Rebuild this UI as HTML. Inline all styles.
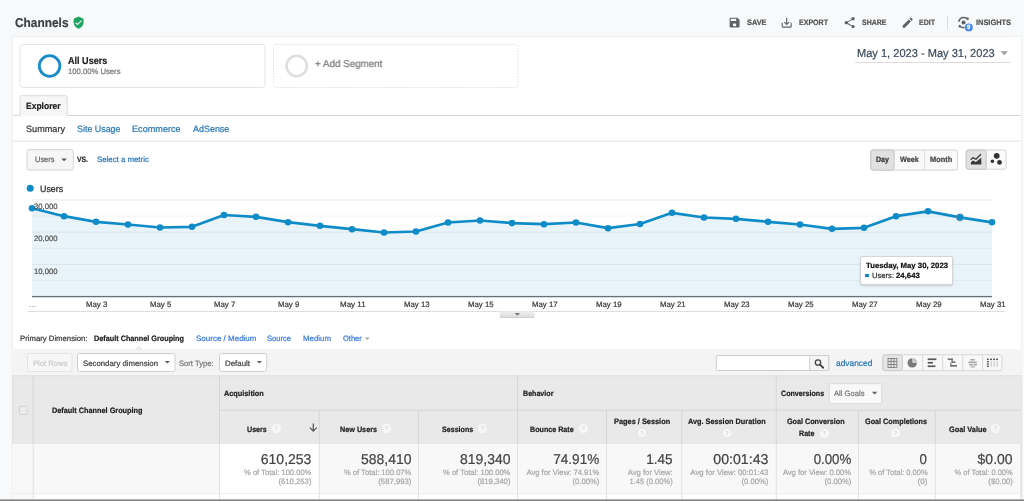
<!DOCTYPE html>
<html lang="en"><head><meta charset="utf-8"><title>Channels - Analytics</title>
<style>
html,body{margin:0;padding:0;}
body{width:1024px;height:501px;overflow:hidden;background:#f8f9fa;position:relative;font-family:"Liberation Sans",sans-serif;}
.t{-webkit-text-stroke:0.22px currentColor;position:absolute;white-space:nowrap;line-height:1;display:block;text-rendering:geometricPrecision;}
#labels{will-change:transform;}
.abs{position:absolute;box-sizing:border-box;}
.vd{width:1px;background:#d8d8d8;}
.hq{width:8.8px;height:8.8px;border-radius:50%;background:#f7f7f7;color:#d9d9d9;font-size:6.2px;line-height:8.8px;text-align:center;font-weight:700;}

</style></head>
<body>
<svg class="abs" id="shapes" style="left:0;top:0" width="1024" height="501" viewBox="0 0 1024 501">
<rect x="11.40" y="36.10" width="1010.60" height="480.00" rx="0" fill="#f1f2f4"/>
<rect x="12.20" y="36.50" width="1009.20" height="480.00" rx="0" fill="#eceef0"/>
<rect x="12.80" y="37.10" width="1008.10" height="480.00" rx="0" fill="#fff"/>
<rect x="19.90" y="44.50" width="245.10" height="42.90" rx="3" fill="#fff" stroke="#e5e5e5" stroke-width="1"/>
<rect x="273.45" y="44.45" width="244.60" height="43.00" rx="3" fill="#fff" stroke="#dadada" stroke-width="0.9" stroke-dasharray="1.400 1.400"/>
<circle cx="49.600" cy="66" r="10.300" fill="none" stroke="#1a8cca" stroke-width="2.800"/>
<circle cx="296.7" cy="66" r="10.2" fill="none" stroke="#dddddd" stroke-width="2.5"/>
<rect x="855.00" y="62.00" width="155.50" height="1.00" rx="0" fill="#dcdcdc"/>
<path d="M1000.60 51.30h7.40l-3.70 3.90z" fill="#9e9e9e"/>
<rect x="13.10" y="115.00" width="7.00" height="1.00" rx="0" fill="#d8d8d8"/>
<rect x="67.20" y="115.00" width="953.40" height="1.00" rx="0" fill="#d8d8d8"/>
<path d="M20 116V97.200q0-1.500 1.500-1.500H65.700q1.500 0 1.500 1.500V116" fill="#f6f6f6" stroke="#dadada" stroke-width="1"/>
<rect x="20.50" y="115.50" width="46.20" height="1.00" rx="0" fill="#fbfbfb"/>
<rect x="13.10" y="140.70" width="1007.50" height="1.00" rx="0" fill="#e2e2e2"/>
<rect x="27.00" y="149.70" width="46.30" height="20.30" rx="2" fill="#f6f6f6" stroke="#d4d4d4" stroke-width="1"/>
<path d="M61.30 158.40h5.60l-2.80 2.90z" fill="#555"/>
<rect x="870.80" y="150.00" width="86.70" height="20.10" rx="2" fill="#f9f9f9" stroke="#d4d4d4" stroke-width="1"/>
<rect x="870.80" y="150.00" width="23.30" height="20.10" rx="2" fill="#e1e1e1" stroke="#c6c6c6" stroke-width="1"/>
<rect x="924.20" y="150.50" width="1.00" height="19.10" rx="0" fill="#dedede"/>
<rect x="966.20" y="150.00" width="39.90" height="19.20" rx="2" fill="#fafafa" stroke="#d4d4d4" stroke-width="1"/>
<rect x="966.20" y="150.00" width="20.00" height="19.20" rx="2" fill="#e1e1e1" stroke="#c6c6c6" stroke-width="1"/>
<circle cx="30.2" cy="188.2" r="3.5" fill="#0f8cc8"/>
<rect x="11.90" y="348.80" width="1010.20" height="26.70" rx="0" fill="#f4f4f4"/>
<path d="M135.600 349.100l3.200-3 3.200 3z" fill="#f0f0f0" stroke="#e4e4e4" stroke-width=".6"/>
<rect x="27.50" y="353.50" width="44.50" height="18.00" rx="2" fill="#f7f7f7" stroke="#e4e4e4" stroke-width="1"/>
<rect x="77.50" y="353.50" width="97.50" height="18.00" rx="2" fill="#fff" stroke="#d0d0d0" stroke-width="1"/>
<path d="M164.60 360.90h5.40l-2.70 2.70z" fill="#606060"/>
<rect x="219.50" y="353.50" width="47.20" height="18.00" rx="2" fill="#fff" stroke="#d0d0d0" stroke-width="1"/>
<path d="M256.80 360.90h5.20l-2.60 2.70z" fill="#606060"/>
<path d="M364.80 337.60h5.00l-2.50 2.50z" fill="#aaa"/>
<rect x="716.30" y="355.50" width="112.40" height="15.00" rx="1" fill="#fff" stroke="#cdcdcd" stroke-width="1"/>
<rect x="809.70" y="355.50" width="19.00" height="15.00" rx="1" fill="#f5f5f5" stroke="#cdcdcd" stroke-width="1"/>
<rect x="882.90" y="354.80" width="119.10" height="15.90" rx="2" fill="#f8f8f8" stroke="#d6d6d6" stroke-width="1"/>
<rect x="882.90" y="354.80" width="19.40" height="15.90" rx="2" fill="#e5e5e5" stroke="#cbcbcb" stroke-width="1"/>
<rect x="922.10" y="355.30" width="1.00" height="14.90" rx="0" fill="#dadada"/>
<rect x="942.10" y="355.30" width="1.00" height="14.90" rx="0" fill="#dadada"/>
<rect x="962.20" y="355.30" width="1.00" height="14.90" rx="0" fill="#dadada"/>
<rect x="982.10" y="355.30" width="1.00" height="14.90" rx="0" fill="#dadada"/>
<rect x="12.30" y="375.50" width="1008.20" height="69.00" rx="0" fill="#e9e9e9"/>
<rect x="12.30" y="375.30" width="1009.90" height="1.00" rx="0" fill="#dedede"/>
<rect x="12.30" y="375.50" width="1.10" height="69.00" rx="0" fill="#e0e0e0"/>
<rect x="12.90" y="444.50" width="1007.60" height="49.00" rx="0" fill="#f8f8f8"/>
<rect x="219.50" y="444.50" width="99.70" height="60.00" rx="0" fill="#fff"/>
<rect x="12.90" y="493.00" width="1007.60" height="1.00" rx="0" fill="#eeeeee"/>
<rect x="12.90" y="494.00" width="20.30" height="8.00" rx="0" fill="#f9f9f9"/>
<rect x="33.20" y="494.00" width="987.20" height="8.00" rx="0" fill="#fff"/>
<rect x="1020.30" y="375.50" width="1.90" height="126.00" rx="0" fill="#e3e3e3"/>
<rect x="32.70" y="375.50" width="1.00" height="69.00" rx="0" fill="#d7d7d7"/>
<rect x="32.70" y="444.50" width="1.00" height="58.00" rx="0" fill="#e2e2e2"/>
<rect x="219.00" y="375.50" width="1.00" height="69.00" rx="0" fill="#d7d7d7"/>
<rect x="219.00" y="444.50" width="1.00" height="58.00" rx="0" fill="#e2e2e2"/>
<rect x="517.00" y="375.50" width="1.00" height="69.00" rx="0" fill="#d7d7d7"/>
<rect x="517.00" y="444.50" width="1.00" height="58.00" rx="0" fill="#e2e2e2"/>
<rect x="775.80" y="375.50" width="1.00" height="69.00" rx="0" fill="#d7d7d7"/>
<rect x="775.80" y="444.50" width="1.00" height="58.00" rx="0" fill="#e2e2e2"/>
<rect x="318.80" y="410.00" width="1.00" height="34.50" rx="0" fill="#d7d7d7"/>
<rect x="318.80" y="444.50" width="1.00" height="58.00" rx="0" fill="#e2e2e2"/>
<rect x="418.00" y="410.00" width="1.00" height="34.50" rx="0" fill="#d7d7d7"/>
<rect x="418.00" y="444.50" width="1.00" height="58.00" rx="0" fill="#e2e2e2"/>
<rect x="606.00" y="410.00" width="1.00" height="34.50" rx="0" fill="#d7d7d7"/>
<rect x="606.00" y="444.50" width="1.00" height="58.00" rx="0" fill="#e2e2e2"/>
<rect x="681.20" y="410.00" width="1.00" height="34.50" rx="0" fill="#d7d7d7"/>
<rect x="681.20" y="444.50" width="1.00" height="58.00" rx="0" fill="#e2e2e2"/>
<rect x="858.00" y="410.00" width="1.00" height="34.50" rx="0" fill="#d7d7d7"/>
<rect x="858.00" y="444.50" width="1.00" height="58.00" rx="0" fill="#e2e2e2"/>
<rect x="934.80" y="410.00" width="1.00" height="34.50" rx="0" fill="#d7d7d7"/>
<rect x="934.80" y="444.50" width="1.00" height="58.00" rx="0" fill="#e2e2e2"/>
<rect x="219.50" y="409.60" width="800.90" height="1.00" rx="0" fill="#d7d7d7"/>
<rect x="19.30" y="406.30" width="7.80" height="8.20" rx="1" fill="#ececec" stroke="#d3d3d3" stroke-width="1"/>
<rect x="829.30" y="383.70" width="52.40" height="20.00" rx="2" fill="#f9f9f9" stroke="#dadada" stroke-width="1"/>
<path d="M871.80 391.70h5.60l-2.80 2.90z" fill="#666"/>
</svg>
<svg class="abs" id="chart" style="left:0;top:190px;" width="1024" height="135" viewBox="0 190 1024 135">
<rect x="32" y="199.50" width="960" height="1" fill="#e8e8e8"/>
<rect x="32" y="215.60" width="960" height="1" fill="#f5f5f5"/>
<rect x="32" y="231.70" width="960" height="1" fill="#efefef"/>
<rect x="32" y="247.80" width="960" height="1" fill="#f5f5f5"/>
<rect x="32" y="263.90" width="960" height="1" fill="#efefef"/>
<rect x="32" y="280.00" width="960" height="1" fill="#f5f5f5"/>
<polygon points="32,296.6 32,208.2 64,216.2 96,221.8 128,224.5 160,227.5 192,226.8 224,215 256,216.8 288,222.2 320,225.8 352,229.2 384,232.5 416,231.5 448,222.5 480,220.5 512,223.1 544,224.2 576,222.5 608,228.2 640,224 672,212.8 704,217.5 736,218.8 768,221.8 800,224.5 832,228.8 864,227.8 896,216.2 928,211.3 960,217.4 992,222.3 992,296.6" fill="#0f8cc8" fill-opacity="0.095"/>
<rect x="32" y="295.95" width="960" height="1.3" fill="#66717a"/>
<polyline points="32,208.2 64,216.2 96,221.8 128,224.5 160,227.5 192,226.8 224,215 256,216.8 288,222.2 320,225.8 352,229.2 384,232.5 416,231.5 448,222.5 480,220.5 512,223.1 544,224.2 576,222.5 608,228.2 640,224 672,212.8 704,217.5 736,218.8 768,221.8 800,224.5 832,228.8 864,227.8 896,216.2 928,211.3 960,217.4 992,222.3" fill="none" stroke="#0f8cc8" stroke-width="2.7" stroke-linejoin="round" stroke-linecap="round"/>
<circle cx="32" cy="208.2" r="3.3" fill="#0f8cc8"/>
<circle cx="64" cy="216.2" r="3.3" fill="#0f8cc8"/>
<circle cx="96" cy="221.8" r="3.3" fill="#0f8cc8"/>
<circle cx="128" cy="224.5" r="3.3" fill="#0f8cc8"/>
<circle cx="160" cy="227.5" r="3.3" fill="#0f8cc8"/>
<circle cx="192" cy="226.8" r="3.3" fill="#0f8cc8"/>
<circle cx="224" cy="215" r="3.3" fill="#0f8cc8"/>
<circle cx="256" cy="216.8" r="3.3" fill="#0f8cc8"/>
<circle cx="288" cy="222.2" r="3.3" fill="#0f8cc8"/>
<circle cx="320" cy="225.8" r="3.3" fill="#0f8cc8"/>
<circle cx="352" cy="229.2" r="3.3" fill="#0f8cc8"/>
<circle cx="384" cy="232.5" r="3.3" fill="#0f8cc8"/>
<circle cx="416" cy="231.5" r="3.3" fill="#0f8cc8"/>
<circle cx="448" cy="222.5" r="3.3" fill="#0f8cc8"/>
<circle cx="480" cy="220.5" r="3.3" fill="#0f8cc8"/>
<circle cx="512" cy="223.1" r="3.3" fill="#0f8cc8"/>
<circle cx="544" cy="224.2" r="3.3" fill="#0f8cc8"/>
<circle cx="576" cy="222.5" r="3.3" fill="#0f8cc8"/>
<circle cx="608" cy="228.2" r="3.3" fill="#0f8cc8"/>
<circle cx="640" cy="224" r="3.3" fill="#0f8cc8"/>
<circle cx="672" cy="212.8" r="3.3" fill="#0f8cc8"/>
<circle cx="704" cy="217.5" r="3.3" fill="#0f8cc8"/>
<circle cx="736" cy="218.8" r="3.3" fill="#0f8cc8"/>
<circle cx="768" cy="221.8" r="3.3" fill="#0f8cc8"/>
<circle cx="800" cy="224.5" r="3.3" fill="#0f8cc8"/>
<circle cx="832" cy="228.8" r="3.3" fill="#0f8cc8"/>
<circle cx="864" cy="227.8" r="3.3" fill="#0f8cc8"/>
<circle cx="896" cy="216.2" r="3.3" fill="#0f8cc8"/>
<circle cx="928" cy="211.3" r="3.3" fill="#0f8cc8"/>
<circle cx="960" cy="217.4" r="4.1" fill="#9a9a9a" fill-opacity="0.55"/>
<circle cx="960" cy="217.4" r="3.3" fill="#0f8cc8"/>
<circle cx="992" cy="222.3" r="3.3" fill="#0f8cc8"/>
<rect x="27.5" y="311" width="978" height="1" fill="#dedede"/>
<defs><linearGradient id="hg" x1="0" y1="0" x2="0" y2="1"><stop offset="0" stop-color="#f0f0f0"/><stop offset="1" stop-color="#dadada"/></linearGradient></defs>
<path d="M499.700 311.500h34.800v5.200q0 1-1 1h-32.800q-1 0-1-1z" fill="url(#hg)"/>
<path d="M500.200 317.500h33.800" stroke="#c6c6c6" stroke-width=".7" fill="none"/>
<path d="M514.6 312.9h5.4l-2.7 2.8z" fill="#777"/>
</svg>
<div class="abs" style="left:860px;top:256.2px;width:93px;height:28.4px;background:#fff;border:1px solid #d4d4d4;border-radius:2px;box-shadow:0 1px 2px rgba(0,0,0,.15);"></div>
<div class="abs" style="left:865px;top:274px;width:3.5px;height:3.2px;background:#0f8cc8;"></div>
<svg class="abs" style="left:71.85px;top:15.85px;" width="13.2" height="13.2" viewBox="0 0 24 24"><path d="M12 1L3 5v6c0 5.55 3.84 10.74 9 12 5.16-1.26 9-6.45 9-12V5l-9-4zm-2 16l-4-4 1.41-1.41L10 14.170l6.59-6.59L18 9l-8 8z" fill="#1ea362"/></svg>
<svg class="abs" style="left:727.7px;top:16.2px;" width="13.2" height="13.2" viewBox="0 0 24 24"><path d="M17 3H5c-1.11 0-2 .9-2 2v14c0 1.1.89 2 2 2h14c1.1 0 2-.9 2-2V7l-4-4zm-5 16c-1.66 0-3-1.34-3-3s1.340-3 3-3 3 1.340 3 3-1.340 3-3 3zm3-10H5V5h10v4z" fill="#5f6368"/></svg>
<svg class="abs" style="left:780px;top:16.2px;" width="13.4" height="13.4" viewBox="0 0 24 24"><path d="M19 12v7H5v-7H3v7c0 1.100.9 2 2 2h14c1.100 0 2-.9 2-2v-7h-2zm-6 .67l2.590-2.580L17 11.500l-5 5-5-5 1.410-1.410L11 12.670V3h2z" fill="#5f6368"/></svg>
<svg class="abs" style="left:842.6px;top:16px;" width="13.4" height="13.4" viewBox="0 0 24 24"><path d="M18 16.080c-.76 0-1.440.3-1.960.77L8.910 12.700c.05-.23.09-.46.09-.7s-.04-.47-.09-.7l7.050-4.110c.54.5 1.250.81 2.040.81 1.660 0 3-1.340 3-3s-1.340-3-3-3-3 1.340-3 3c0 .24.04.47.09.7L8.040 9.810C7.500 9.310 6.790 9 6 9c-1.660 0-3 1.340-3 3s1.340 3 3 3c.79 0 1.500-.31 2.040-.81l7.120 4.160c-.05.21-.08.43-.08.65 0 1.610 1.310 2.920 2.920 2.920 1.610 0 2.920-1.310 2.920-2.920s-1.310-2.920-2.920-2.920z" fill="#5f6368"/></svg>
<svg class="abs" style="left:900.7px;top:16.3px;" width="13.4" height="13.4" viewBox="0 0 24 24"><path d="M3 17.250V21h3.750L17.810 9.940l-3.750-3.750L3 17.250zM20.710 7.040c.39-.39.39-1.020 0-1.410l-2.340-2.340c-.39-.39-1.020-.39-1.410 0l-1.830 1.830 3.750 3.750 1.830-1.830z" fill="#5f6368"/></svg>
<div class="abs" style="left:947px;top:16px;width:1px;height:13.2px;background:#dadce0;"></div>
<svg class="abs" style="left:956px;top:15px;" width="20" height="20" viewBox="956 15 20 20">
<path d="M958.9 21.2a5 5 0 0 1 8.9-1.700" fill="none" stroke="#5f6368" stroke-width="1.5" stroke-linecap="round"/>
<path d="M968.5 23.600a5 5 0 0 1 -9 1.900" fill="none" stroke="#5f6368" stroke-width="1.500" stroke-linecap="round"/>
<path d="M966.6 17.300l2.600.6-1.500 2.200z" fill="#5f6368"/>
<path d="M960.700 27.700l-2.600-.6 1.500-2.200z" fill="#5f6368"/>
<circle cx="963.600" cy="22.500" r="2.100" fill="#5f6368"/>
<circle cx="968.800" cy="27.400" r="4.300" fill="#f8f9fa"/>
<circle cx="968.800" cy="27.400" r="3.950" fill="#4285f4"/>
</svg>
<svg class="abs" style="left:966px;top:150px;" width="41" height="20" viewBox="966 150 41 20">
<path d="M970.700 159.800l2.200-2.200 3 1.700 5-5.100" fill="none" stroke="#3a3a3a" stroke-width="1.250" stroke-linejoin="round"/>
<path d="M970.900 164.500v-2.300l2.100-1.600 2.900 1.500 5.400-4.400v6.800z" fill="#3a3a3a"/>
<circle cx="996.700" cy="155.800" r="2.900" fill="#333"/>
<circle cx="992.400" cy="161.200" r="1.800" fill="#333"/>
<circle cx="999.500" cy="162.400" r="2.400" fill="#333"/>
</svg>
<svg class="abs" style="left:812px;top:357px;" width="14" height="13" viewBox="812 357 14 13">
<circle cx="818" cy="362.500" r="2.700" fill="none" stroke="#444" stroke-width="1.300"/>
<path d="M820 364.600l3.200 3.100" stroke="#444" stroke-width="1.900" stroke-linecap="round"/>
</svg>
<svg class="abs" style="left:882px;top:354px;" width="121" height="18" viewBox="882 354 121 18">
<g fill="none" stroke="#6e6e6e" stroke-width="0.75"><rect x="888" y="358.400" width="8.900" height="9.100"/><path d="M891 358.400v9.100M893.900 358.400v9.100M888 361.400h8.900M888 364.500h8.900"/></g>
<circle cx="912.200" cy="362.900" r="4.700" fill="#7a7a7a"/><path d="M912.700 362.400v-4.700a4.700 4.700 0 0 1 4.700 4.700z" fill="#c4c4c4" stroke="#f6f6f6" stroke-width="0.600"/>
<g fill="#585858"><rect x="927.700" y="358.400" width="8.700" height="1.700"/><rect x="927.700" y="361.900" width="5.200" height="1.700"/><rect x="927.700" y="365.400" width="7.700" height="1.700"/></g>
<g fill="#606060"><rect x="947.700" y="358.500" width="5" height="1.400"/><rect x="951.600" y="358.500" width="1" height="4.200"/><rect x="951.600" y="361.400" width="3.800" height="1.400"/><rect x="950.400" y="362.600" width="1" height="3.800"/><rect x="950.400" y="365.100" width="6.600" height="1.500"/></g>
<g fill="#a8a8a8"><rect x="970" y="359" width="5" height="1.600" rx=".8"/><rect x="968.200" y="361.400" width="8.800" height="1.800" rx=".9"/><rect x="969" y="364" width="4" height="1.600" rx=".8"/><rect x="973.400" y="364" width="3.800" height="1.600" rx=".8"/><rect x="970.500" y="366.300" width="4.600" height="1.300" rx=".6"/></g>
<g fill="#5a5a5a"><rect x="986.900" y="358.600" width="2" height="1.400"/><rect x="986.900" y="360.900" width="2" height="1.400"/><rect x="986.900" y="363.200" width="2" height="1.400"/><rect x="986.900" y="365.500" width="2" height="1.400"/><rect x="990" y="358.600" width="2" height="1.400"/><rect x="993" y="358.600" width="2" height="1.400"/><rect x="996" y="358.600" width="2" height="1.400"/></g><g fill="#b5b5b5"><rect x="990.700" y="360.600" width=".8" height="6.300"/><rect x="993.700" y="360.600" width=".8" height="6.300"/><rect x="996.700" y="360.600" width=".8" height="6.300"/></g>
</svg>
<span class="abs hq" style="left:271.8px;top:423.8px;">?</span>
<span class="abs hq" style="left:381.9px;top:424.1px;">?</span>
<span class="abs hq" style="left:478.4px;top:424.1px;">?</span>
<span class="abs hq" style="left:578.8px;top:424.1px;">?</span>
<span class="abs hq" style="left:637.6px;top:428.6px;">?</span>
<span class="abs hq" style="left:722.6px;top:428.6px;">?</span>
<span class="abs hq" style="left:819.8px;top:429.4px;">?</span>
<span class="abs hq" style="left:891.1px;top:428.6px;">?</span>
<span class="abs hq" style="left:991.1px;top:424.1px;">?</span>
<svg class="abs" style="left:308px;top:422px;" width="11" height="11" viewBox="308 422 11 11">
<path d="M313.300 423.400v7.300M309.900 427.600l3.400 3.500 3.400-3.500" fill="none" stroke="#555" stroke-width="1.250"/>
</svg>
<!-- bottom screenshot edge -->
<svg class="abs" style="left:0;top:497px" width="1024" height="4" viewBox="0 497 1024 4"><defs><linearGradient id="be" x1="0" y1="0" x2="0" y2="1"><stop offset="0" stop-color="#bdbdbd"/><stop offset="1" stop-color="#6a6a6a"/></linearGradient></defs><rect x="0" y="499.100" width="1024" height="2" fill="url(#be)"/></svg>

<div id="labels">
<span class="t" id="t0" style="left:14.50px;transform-origin:0 0;top:17.16px;font-size:12.8px;font-weight:700;color:#3c4043;transform:scaleX(0.9287);">Channels</span>
<span class="t" id="t1" style="left:746.50px;transform-origin:0 0;top:18.88px;font-size:7.82px;font-weight:700;color:#555;transform:scaleX(0.9419);">SAVE</span>
<span class="t" id="t2" style="left:799.00px;transform-origin:0 0;top:18.88px;font-size:7.82px;font-weight:700;color:#555;transform:scaleX(0.9027);">EXPORT</span>
<span class="t" id="t3" style="left:861.50px;transform-origin:0 0;top:18.88px;font-size:7.82px;font-weight:700;color:#555;transform:scaleX(0.8955);">SHARE</span>
<span class="t" id="t4" style="left:919.00px;transform-origin:0 0;top:18.88px;font-size:7.82px;font-weight:700;color:#555;transform:scaleX(0.8990);">EDIT</span>
<span class="t" id="t5" style="left:976.00px;transform-origin:0 0;top:18.88px;font-size:7.82px;font-weight:700;color:#555;transform:scaleX(0.9483);">INSIGHTS</span>
<span class="t" id="t6" style="left:857.30px;transform-origin:0 0;top:48.87px;font-size:11.5px;font-weight:400;color:#3c4a5c;transform:scaleX(0.9616);">May 1, 2023 - May 31, 2023</span>
<span class="t" id="t7" style="left:67.50px;transform-origin:0 0;top:57.37px;font-size:9.96px;font-weight:700;color:#222;transform:scaleX(0.9106);">All Users</span>
<span class="t" id="t8" style="left:68.00px;transform-origin:0 0;top:67.58px;font-size:7.82px;font-weight:400;color:#777;transform:scaleX(0.9827);">100.00% Users</span>
<span class="t" id="t9" style="left:314.80px;transform-origin:0 0;top:60.07px;font-size:9.96px;font-weight:400;color:#777;transform:scaleX(0.9862);">+ Add Segment</span>
<span class="t" id="t10" style="left:26.00px;transform-origin:0 0;top:102.18px;font-size:9.24px;font-weight:700;color:#222;transform:scaleX(0.9208);">Explorer</span>
<span class="t" id="t11" style="left:25.50px;transform-origin:0 0;top:125.18px;font-size:9.24px;font-weight:400;color:#333;transform:scaleX(0.9870);">Summary</span>
<span class="t" id="t12" style="left:76.50px;transform-origin:0 0;top:125.18px;font-size:9.24px;font-weight:400;color:#2a77b8;transform:scaleX(0.9630);">Site Usage</span>
<span class="t" id="t13" style="left:131.80px;transform-origin:0 0;top:125.18px;font-size:9.24px;font-weight:400;color:#2a77b8;transform:scaleX(0.9885);">Ecommerce</span>
<span class="t" id="t14" style="left:192.50px;transform-origin:0 0;top:125.18px;font-size:9.24px;font-weight:400;color:#2a77b8;transform:scaleX(0.9684);">AdSense</span>
<span class="t" id="t15" style="left:34.50px;transform-origin:0 0;top:155.88px;font-size:7.82px;font-weight:400;color:#666;transform:scaleX(0.9556);">Users</span>
<span class="t" id="t16" style="left:77.00px;transform-origin:0 0;top:155.68px;font-size:7.82px;font-weight:700;color:#333;transform:scaleX(0.8734);">VS.</span>
<span class="t" id="t17" style="left:97.00px;transform-origin:0 0;top:155.88px;font-size:7.82px;font-weight:400;color:#2a77b8;transform:scaleX(1.0025);">Select a metric</span>
<span class="t" id="t18" style="left:876.00px;transform-origin:0 0;top:155.68px;font-size:7.82px;font-weight:700;color:#333;transform:scaleX(0.8993);">Day</span>
<span class="t" id="t19" style="left:899.90px;transform-origin:0 0;top:155.68px;font-size:7.82px;font-weight:700;color:#444;transform:scaleX(0.9319);">Week</span>
<span class="t" id="t20" style="left:930.20px;transform-origin:0 0;top:155.68px;font-size:7.82px;font-weight:700;color:#444;transform:scaleX(0.9515);">Month</span>
<span class="t" id="t21" style="left:40.00px;transform-origin:0 0;top:184.98px;font-size:9.24px;font-weight:400;color:#222;transform:scaleX(0.9617);">Users</span>
<span class="t" id="t22" style="left:967.20px;transform-origin:0 0;top:25.45px;font-size:6.2px;font-weight:700;color:#fff;transform:scaleX(0.9557);">9</span>
<span class="t" id="t23" style="left:20.00px;transform-origin:0 0;top:334.88px;font-size:7.82px;font-weight:400;color:#3a3a3a;transform:scaleX(0.9901);">Primary Dimension:</span>
<span class="t" id="t24" style="left:93.80px;transform-origin:0 0;top:334.88px;font-size:7.82px;font-weight:700;color:#222;transform:scaleX(0.9298);">Default Channel Grouping</span>
<span class="t" id="t25" style="left:195.50px;transform-origin:0 0;top:334.88px;font-size:7.82px;font-weight:400;color:#3b7be0;transform:scaleX(1.0243);">Source / Medium</span>
<span class="t" id="t26" style="left:267.00px;transform-origin:0 0;top:334.88px;font-size:7.82px;font-weight:400;color:#3b7be0;transform:scaleX(0.9691);">Source</span>
<span class="t" id="t27" style="left:303.00px;transform-origin:0 0;top:334.88px;font-size:7.82px;font-weight:400;color:#3b7be0;transform:scaleX(1.0073);">Medium</span>
<span class="t" id="t28" style="left:342.80px;transform-origin:0 0;top:334.88px;font-size:7.82px;font-weight:400;color:#3b7be0;transform:scaleX(0.9567);">Other</span>
<span class="t" id="t29" style="left:32.50px;transform-origin:0 0;top:360.18px;font-size:7.82px;font-weight:400;color:#ccc;transform:scaleX(0.9809);">Plot Rows</span>
<span class="t" id="t30" style="left:82.50px;transform-origin:0 0;top:360.18px;font-size:7.82px;font-weight:400;color:#444;transform:scaleX(0.9981);">Secondary dimension</span>
<span class="t" id="t31" style="left:179.20px;transform-origin:0 0;top:360.18px;font-size:7.82px;font-weight:400;color:#777;transform:scaleX(0.9755);">Sort Type:</span>
<span class="t" id="t32" style="left:224.50px;transform-origin:0 0;top:360.18px;font-size:7.82px;font-weight:400;color:#444;transform:scaleX(1.0095);">Default</span>
<span class="t" id="t33" style="left:835.50px;transform-origin:0 0;top:359.28px;font-size:8.53px;font-weight:400;color:#2a77b8;transform:scaleX(0.9827);">advanced</span>
<span class="t" id="t34" style="left:52.00px;transform-origin:0 0;top:407.38px;font-size:7.82px;font-weight:700;color:#222;transform:scaleX(0.9349);">Default Channel Grouping</span>
<span class="t" id="t35" style="left:224.20px;transform-origin:0 0;top:389.58px;font-size:7.82px;font-weight:700;color:#222;transform:scaleX(0.9354);">Acquisition</span>
<span class="t" id="t36" style="left:522.80px;transform-origin:0 0;top:389.58px;font-size:7.82px;font-weight:700;color:#222;transform:scaleX(0.9092);">Behavior</span>
<span class="t" id="t37" style="left:781.00px;transform-origin:0 0;top:389.58px;font-size:7.82px;font-weight:700;color:#222;transform:scaleX(0.9128);">Conversions</span>
<span class="t" id="t38" style="left:834.20px;transform-origin:0 0;top:389.58px;font-size:7.82px;font-weight:400;color:#777;transform:scaleX(0.9787);">All Goals</span>
<span class="t" id="t39" style="left:247.00px;transform-origin:0 0;top:426.38px;font-size:7.82px;font-weight:700;color:#222;transform:scaleX(0.9117);">Users</span>
<span class="t" id="t40" style="left:339.80px;transform-origin:0 0;top:426.38px;font-size:7.82px;font-weight:700;color:#222;transform:scaleX(0.9261);">New Users</span>
<span class="t" id="t41" style="left:441.80px;transform-origin:0 0;top:426.38px;font-size:7.82px;font-weight:700;color:#222;transform:scaleX(0.9093);">Sessions</span>
<span class="t" id="t42" style="left:529.50px;transform-origin:0 0;top:426.38px;font-size:7.82px;font-weight:700;color:#222;transform:scaleX(0.9149);">Bounce Rate</span>
<span class="t" id="t43" style="left:614.00px;transform-origin:0 0;top:418.18px;font-size:7.82px;font-weight:700;color:#222;transform:scaleX(0.9445);">Pages / Session</span>
<span class="t" id="t44" style="left:688.20px;transform-origin:0 0;top:418.18px;font-size:7.82px;font-weight:700;color:#222;transform:scaleX(0.9342);">Avg. Session Duration</span>
<span class="t" id="t45" style="left:787.20px;transform-origin:0 0;top:418.18px;font-size:7.82px;font-weight:700;color:#222;transform:scaleX(0.9214);">Goal Conversion</span>
<span class="t" id="t46" style="left:798.80px;transform-origin:0 0;top:430.18px;font-size:7.82px;font-weight:700;color:#222;transform:scaleX(0.9092);">Rate</span>
<span class="t" id="t47" style="left:864.80px;transform-origin:0 0;top:418.18px;font-size:7.82px;font-weight:700;color:#222;transform:scaleX(0.9273);">Goal Completions</span>
<span class="t" id="t48" style="left:948.50px;transform-origin:0 0;top:426.38px;font-size:7.82px;font-weight:700;color:#222;transform:scaleX(0.9386);">Goal Value</span>
<span class="t" id="t49" style="right:712.20px;transform-origin:100% 0;top:453.16px;font-size:14.22px;font-weight:400;color:#444;transform:scaleX(0.9843);">610,253</span>
<span class="t" id="t50" style="right:712.20px;transform-origin:100% 0;top:469.38px;font-size:7.82px;font-weight:400;color:#a8a8a8;transform:scaleX(0.9703);">% of Total: 100.00%</span>
<span class="t" id="t51" style="right:712.20px;transform-origin:100% 0;top:478.18px;font-size:7.82px;font-weight:400;color:#a8a8a8;transform:scaleX(0.9865);">(610,253)</span>
<span class="t" id="t52" style="right:612.80px;transform-origin:100% 0;top:453.16px;font-size:14.22px;font-weight:400;color:#444;transform:scaleX(0.9804);">588,410</span>
<span class="t" id="t53" style="right:612.80px;transform-origin:100% 0;top:469.38px;font-size:7.82px;font-weight:400;color:#a8a8a8;transform:scaleX(0.9718);">% of Total: 100.07%</span>
<span class="t" id="t54" style="right:612.80px;transform-origin:100% 0;top:478.18px;font-size:7.82px;font-weight:400;color:#a8a8a8;transform:scaleX(0.9924);">(587,993)</span>
<span class="t" id="t55" style="right:513.80px;transform-origin:100% 0;top:453.16px;font-size:14.22px;font-weight:400;color:#444;transform:scaleX(0.9804);">819,340</span>
<span class="t" id="t56" style="right:513.80px;transform-origin:100% 0;top:469.38px;font-size:7.82px;font-weight:400;color:#a8a8a8;transform:scaleX(0.9703);">% of Total: 100.00%</span>
<span class="t" id="t57" style="right:513.80px;transform-origin:100% 0;top:478.18px;font-size:7.82px;font-weight:400;color:#a8a8a8;transform:scaleX(0.9865);">(819,340)</span>
<span class="t" id="t58" style="right:425.00px;transform-origin:100% 0;top:453.16px;font-size:14.22px;font-weight:400;color:#444;transform:scaleX(0.9537);">74.91%</span>
<span class="t" id="t59" style="right:425.00px;transform-origin:100% 0;top:469.38px;font-size:7.82px;font-weight:400;color:#a8a8a8;transform:scaleX(0.9809);">Avg for View: 74.91%</span>
<span class="t" id="t60" style="right:425.00px;transform-origin:100% 0;top:478.18px;font-size:7.82px;font-weight:400;color:#a8a8a8;transform:scaleX(0.9796);">(0.00%)</span>
<span class="t" id="t61" style="right:351.00px;transform-origin:100% 0;top:453.16px;font-size:14.22px;font-weight:400;color:#444;transform:scaleX(0.9571);">1.45</span>
<span class="t" id="t62" style="right:351.00px;transform-origin:100% 0;top:469.38px;font-size:7.82px;font-weight:400;color:#a8a8a8;transform:scaleX(0.9836);">Avg for View:</span>
<span class="t" id="t63" style="right:351.00px;transform-origin:100% 0;top:478.18px;font-size:7.82px;font-weight:400;color:#a8a8a8;transform:scaleX(0.9657);">1.45 (0.00%)</span>
<span class="t" id="t64" style="right:255.60px;transform-origin:100% 0;top:453.16px;font-size:14.22px;font-weight:400;color:#444;transform:scaleX(0.9935);">00:01:43</span>
<span class="t" id="t65" style="right:255.60px;transform-origin:100% 0;top:469.38px;font-size:7.82px;font-weight:400;color:#a8a8a8;transform:scaleX(0.9958);">Avg for View: 00:01:43</span>
<span class="t" id="t66" style="right:255.60px;transform-origin:100% 0;top:478.18px;font-size:7.82px;font-weight:400;color:#a8a8a8;transform:scaleX(0.9796);">(0.00%)</span>
<span class="t" id="t67" style="right:172.80px;transform-origin:100% 0;top:453.16px;font-size:14.22px;font-weight:400;color:#444;transform:scaleX(0.9348);">0.00%</span>
<span class="t" id="t68" style="right:172.80px;transform-origin:100% 0;top:469.38px;font-size:7.82px;font-weight:400;color:#a8a8a8;transform:scaleX(0.9732);">Avg for View: 0.00%</span>
<span class="t" id="t69" style="right:172.80px;transform-origin:100% 0;top:478.18px;font-size:7.82px;font-weight:400;color:#a8a8a8;transform:scaleX(0.9796);">(0.00%)</span>
<span class="t" id="t70" style="right:96.60px;transform-origin:100% 0;top:453.16px;font-size:14.22px;font-weight:400;color:#444;transform:scaleX(0.9341);">0</span>
<span class="t" id="t71" style="right:96.60px;transform-origin:100% 0;top:469.38px;font-size:7.82px;font-weight:400;color:#a8a8a8;transform:scaleX(0.9626);">% of Total: 0.00%</span>
<span class="t" id="t72" style="right:96.60px;transform-origin:100% 0;top:478.18px;font-size:7.82px;font-weight:400;color:#a8a8a8;transform:scaleX(1.0458);">(0)</span>
<span class="t" id="t73" style="right:11.00px;transform-origin:100% 0;top:453.16px;font-size:14.22px;font-weight:400;color:#444;transform:scaleX(0.9833);">$0.00</span>
<span class="t" id="t74" style="right:11.00px;transform-origin:100% 0;top:469.38px;font-size:7.82px;font-weight:400;color:#a8a8a8;transform:scaleX(0.9593);">% of Total: 0.00%</span>
<span class="t" id="t75" style="right:11.00px;transform-origin:100% 0;top:478.18px;font-size:7.82px;font-weight:400;color:#a8a8a8;transform:scaleX(0.9852);">($0.00)</span>
<span class="t" id="t76" style="left:34.20px;transform-origin:0 0;top:203.00px;font-size:7.8px;font-weight:400;color:#555;transform:scaleX(0.9891);">30,000</span>
<span class="t" id="t77" style="left:34.20px;transform-origin:0 0;top:235.20px;font-size:7.8px;font-weight:400;color:#555;transform:scaleX(0.9891);">20,000</span>
<span class="t" id="t78" style="left:34.20px;transform-origin:0 0;top:268.40px;font-size:7.8px;font-weight:400;color:#555;transform:scaleX(0.9891);">10,000</span>
<span class="t" id="t79" style="left:85.95px;transform-origin:0 0;top:301.40px;font-size:7.8px;font-weight:400;color:#3c3c3c;transform:scaleX(1.0031);">May 3</span>
<span class="t" id="t80" style="left:149.95px;transform-origin:0 0;top:301.40px;font-size:7.8px;font-weight:400;color:#3c3c3c;transform:scaleX(1.0031);">May 5</span>
<span class="t" id="t81" style="left:213.95px;transform-origin:0 0;top:301.40px;font-size:7.8px;font-weight:400;color:#3c3c3c;transform:scaleX(1.0031);">May 7</span>
<span class="t" id="t82" style="left:277.95px;transform-origin:0 0;top:301.40px;font-size:7.8px;font-weight:400;color:#3c3c3c;transform:scaleX(1.0031);">May 9</span>
<span class="t" id="t83" style="left:339.80px;transform-origin:0 0;top:301.40px;font-size:7.8px;font-weight:400;color:#3c3c3c;transform:scaleX(1.0240);">May 11</span>
<span class="t" id="t84" style="left:403.80px;transform-origin:0 0;top:301.40px;font-size:7.8px;font-weight:400;color:#3c3c3c;transform:scaleX(1.0009);">May 13</span>
<span class="t" id="t85" style="left:467.80px;transform-origin:0 0;top:301.40px;font-size:7.8px;font-weight:400;color:#3c3c3c;transform:scaleX(1.0009);">May 15</span>
<span class="t" id="t86" style="left:531.80px;transform-origin:0 0;top:301.40px;font-size:7.8px;font-weight:400;color:#3c3c3c;transform:scaleX(1.0009);">May 17</span>
<span class="t" id="t87" style="left:595.80px;transform-origin:0 0;top:301.40px;font-size:7.8px;font-weight:400;color:#3c3c3c;transform:scaleX(1.0009);">May 19</span>
<span class="t" id="t88" style="left:659.80px;transform-origin:0 0;top:301.40px;font-size:7.8px;font-weight:400;color:#3c3c3c;transform:scaleX(1.0009);">May 21</span>
<span class="t" id="t89" style="left:723.80px;transform-origin:0 0;top:301.40px;font-size:7.8px;font-weight:400;color:#3c3c3c;transform:scaleX(1.0009);">May 23</span>
<span class="t" id="t90" style="left:787.80px;transform-origin:0 0;top:301.40px;font-size:7.8px;font-weight:400;color:#3c3c3c;transform:scaleX(1.0009);">May 25</span>
<span class="t" id="t91" style="left:851.80px;transform-origin:0 0;top:301.40px;font-size:7.8px;font-weight:400;color:#3c3c3c;transform:scaleX(1.0009);">May 27</span>
<span class="t" id="t92" style="left:915.80px;transform-origin:0 0;top:301.40px;font-size:7.8px;font-weight:400;color:#3c3c3c;transform:scaleX(1.0009);">May 29</span>
<span class="t" id="t93" style="left:979.80px;transform-origin:0 0;top:301.40px;font-size:7.8px;font-weight:400;color:#3c3c3c;transform:scaleX(1.0009);">May 31</span>
<span class="t" id="t94" style="left:28.60px;transform-origin:0 0;top:301.40px;font-size:7.8px;font-weight:400;color:#a0a0a0;transform:scaleX(1.1231);">...</span>
<span class="t" id="t95" style="left:865.50px;transform-origin:0 0;top:261.73px;font-size:7.64px;font-weight:700;color:#111;transform:scaleX(1.0165);">Tuesday, May 30, 2023</span>
<span class="t" id="t96" style="left:871.80px;transform-origin:0 0;top:271.73px;font-size:7.64px;font-weight:400;color:#333;transform:scaleX(0.9986);">Users:</span>
<span class="t" id="t97" style="left:896.20px;transform-origin:0 0;top:271.73px;font-size:7.64px;font-weight:700;color:#111;transform:scaleX(1.0202);">24,643</span>
</div>
</body></html>
